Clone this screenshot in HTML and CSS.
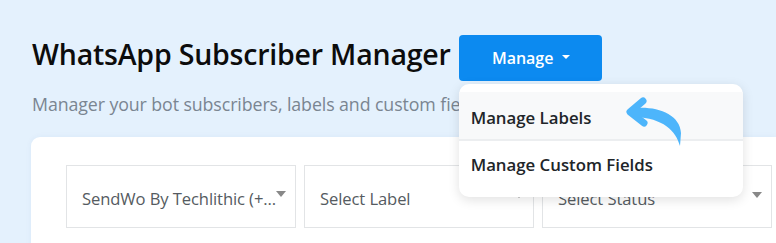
FILE: index.html
```html
<!DOCTYPE html>
<html>
<head>
<meta charset="utf-8">
<link rel="stylesheet" href="styles.css">
</head>
<body>
<div class="page">
  <div class="header">
    <div class="title-row">
      <h1 class="title">WhatsApp Subscriber Manager</h1>
      <div class="dropdown">
        <button class="btn">Manage <span class="caret"></span></button>
        <div class="menu">
          <div class="item active">Manage Labels</div>
          <div class="divider"></div>
          <div class="item">Manage Custom Fields</div>
          <svg class="pointer" width="66" height="56" viewBox="0 0 66 56">
            <path d="M20 6 L7 17 L21 28" fill="none" stroke="#4db5fb" stroke-width="7" stroke-linecap="round" stroke-linejoin="round"/>
            <path d="M12 13 C34 11 57 19 58 38 L57 51 C53 36 40 23 12 22 Z" fill="#4db5fb"/>
          </svg>
        </div>
      </div>
    </div>
    <p class="subtitle">Manager your bot subscribers, labels and custom fields</p>
  </div>
  <div class="card">
    <div class="filters">
      <div class="select"><span class="select-text">SendWo By Techlithic (+...</span><span class="sel-caret first"></span></div>
      <div class="select"><span class="select-text">Select Label</span><span class="sel-caret"></span></div>
      <div class="select"><span class="select-text">Select Status</span><span class="sel-caret"></span></div>
    </div>
  </div>
</div>
</body>
</html>
```
FILE: styles.css
```css
* { box-sizing: border-box; }
html, body {
  margin: 0;
  padding: 0;
  background: #e4f1fd;
  font-family: "Open Sans", "Noto Sans", sans-serif;
  overflow: hidden;
}
.page {
  width: 776px;
  height: 243px;
  overflow: hidden;
}
.header {
  padding: 35px 0 0 32px;
}
.title-row {
  display: flex;
  align-items: center;
  gap: 8px;
  height: 46px;
}
.title {
  margin: 0;
  font-size: 28.5px;
  font-weight: 600;
  color: #0c0c0c;
  letter-spacing: -0.2px;
  line-height: 46px;
  position: relative;
  top: -4px;
  white-space: nowrap;
}
.dropdown {
  position: relative;
}
.btn {
  width: 143px;
  height: 46px;
  border: none;
  border-radius: 4px;
  background: #0c8af0;
  color: #fff;
  font-family: "Open Sans", "Noto Sans", sans-serif;
  font-size: 16px;
  font-weight: 600;
  display: flex;
  align-items: center;
  justify-content: center;
  gap: 9px;
  padding: 0 0 0 2px;
}
.caret {
  width: 0;
  height: 0;
  border-left: 4px solid transparent;
  border-right: 4px solid transparent;
  border-top: 4px solid #fff;
  margin-top: -2px;
}
.menu {
  position: absolute;
  left: 0;
  top: 49px;
  width: 284px;
  padding: 8px 0 9px;
  background: #fff;
  border-radius: 10px;
  box-shadow: 0 3px 12px rgba(0, 0, 0, 0.12);
  z-index: 5;
}
.item {
  height: 47px;
  display: flex;
  align-items: center;
  padding-left: 12px;
  font-size: 16.8px;
  font-weight: 600;
  color: #212529;
}
.item.active {
  background: #f8f9fa;
  padding-top: 3px;
}
.divider {
  height: 2px;
  background: #eceef0;
}
.pointer {
  position: absolute;
  left: 164px;
  top: 11px;
}
.subtitle {
  margin: 10px 0 0 0;
  font-size: 17.8px;
  color: #7a8591;
  line-height: 26px;
  letter-spacing: -0.1px;
  white-space: nowrap;
}
.card {
  margin: 20px 0 0 31px;
  background: #fff;
  border-radius: 9px 0 0 0;
  height: 120px;
  padding: 28px 0 0 35px;
  box-shadow: 0 0 6px rgba(0, 80, 160, 0.05);
}
.filters {
  display: flex;
  gap: 8px;
}
.select {
  flex: 0 0 230px;
  height: 63px;
  border: 1px solid #e2e4e6;
  position: relative;
  display: flex;
  align-items: center;
  padding: 4px 0 0 15px;
}
.select-text {
  font-size: 16.6px;
  color: #555b61;
  letter-spacing: -0.1px;
  white-space: nowrap;
}
.sel-caret {
  position: absolute;
  right: 9px;
  top: 26px;
  width: 0;
  height: 0;
  border-left: 5px solid transparent;
  border-right: 5px solid transparent;
  border-top: 6px solid #888;
}
.sel-caret.first {
  right: 9px;
  top: 25px;
}
```
